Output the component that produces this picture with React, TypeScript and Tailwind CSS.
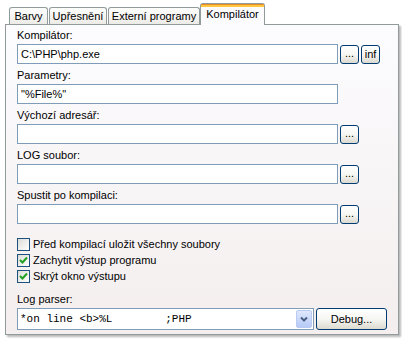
import React from 'react';

const font = { fontFamily: '"Liberation Sans", Arial, sans-serif' };

const XpButton: React.FC<{ label: string; className?: string }> = ({ label, className = '' }) => (
  <button
    className={`flex items-center justify-center rounded-[3px] border border-[#003c74] bg-gradient-to-b from-white via-[#f6f6f3] to-[#dcdad0] text-[11px] leading-none text-black ${className}`}
  >
    {label}
  </button>
);

const Field: React.FC<{ label: string; value?: string; extra?: boolean }> = ({ label, value = '', extra }) => (
  <div className="flex flex-col">
    <div className="h-[14px] text-[11px] leading-[14px] text-black">{label}</div>
    <div className="mt-[2px] flex items-center">
      <div className="flex h-[20px] w-[321px] items-center border border-[#7f9db9] bg-white px-[3px] text-[11px] text-black">
        {value}
      </div>
      <XpButton label="..." className="ml-[2px] h-[19px] w-[19px] pb-[2px]" />
      {extra && <XpButton label="inf" className="ml-[2px] h-[19px] w-[19px]" />}
    </div>
  </div>
);

const Checkbox: React.FC<{ label: string; checked?: boolean }> = ({ label, checked }) => (
  <div className="flex h-[16px] items-center">
    <div className="flex h-[13px] w-[13px] items-center justify-center border border-[#1c5180] bg-gradient-to-br from-[#dcdcd7] to-white">
      {checked && (
        <svg width="9" height="9" viewBox="0 0 9 9">
          <path d="M1 4 L3.5 6.5 L8 1.5" stroke="#21a121" strokeWidth="2" fill="none" />
        </svg>
      )}
    </div>
    <span className="ml-[3px] text-[11px] leading-none text-black">{label}</span>
  </div>
);

const tabs = [
  { name: 'Barvy', w: 'w-[39px]' },
  { name: 'Upřesnění', w: 'w-[58px]' },
  { name: 'Externí programy', w: 'w-[92px]' },
];

export default function App() {
  return (
    <div className="h-[344px] w-[402px] bg-white" style={font}>
      {/* Tabs */}
      <div className="flex h-[24px] items-end pl-[9px]">
        {tabs.map((t) => (
          <div
            key={t.name}
            className={`mr-px flex h-[17px] ${t.w} items-center justify-center rounded-t-[3px] border border-b-0 border-[#919b9c] bg-gradient-to-b from-white to-[#ecebe6] text-[11px] text-black`}
          >
            {t.name}
          </div>
        ))}
        <div className="relative z-10 -mb-px -ml-px flex h-[22px] w-[65px] flex-col rounded-t-[3px] border border-b-0 border-[#919b9c] bg-[#fcfcfe]">
          <div className="h-[1px] rounded-t-[2px] bg-[#e68b2c]" />
          <div className="h-[2px] bg-[#ffc73c]" />
          <div className="flex flex-1 items-start justify-center pt-[2px] text-[11px] leading-none text-black">Kompilátor</div>
        </div>
      </div>

      {/* Panel */}
      <div className="ml-[5px] flex h-[311px] w-[394px] flex-col border border-[#919b9c] bg-gradient-to-b from-[#fcfcfe] to-[#f4eeee] pl-[11px] pt-[3px] shadow-[2px_2px_2px_rgba(0,0,0,0.28)]">
        <div className="flex flex-col gap-[4px]">
          <Field label="Kompilátor:" value="C:\PHP\php.exe" extra />
          <div className="flex flex-col">
            <div className="h-[14px] text-[11px] leading-[14px] text-black">Parametry:</div>
            <div className="mt-[2px] flex h-[20px] w-[321px] items-center border border-[#7f9db9] bg-white px-[3px] text-[11px] text-black">
              "%File%"
            </div>
          </div>
          <Field label="Výchozí adresář:" />
          <Field label="LOG soubor:" />
          <Field label="Spustit po kompilaci:" />
        </div>

        <div className="mt-[12px] flex flex-col">
          <Checkbox label="Před kompilací uložit všechny soubory" />
          <Checkbox label="Zachytit výstup programu" checked />
          <Checkbox label="Skrýt okno výstupu" checked />
        </div>

        <div className="mt-[8px] h-[14px] text-[11px] leading-[14px] text-black">Log parser:</div>
        <div className="mt-[2px] flex items-center">
          <div className="flex h-[22px] w-[297px] items-center border border-[#7f9db9] bg-white pl-[2px] pr-px">
            <span
              className="flex-1 whitespace-pre text-[11px] text-black"
              style={{ fontFamily: '"Liberation Mono", "Courier New", monospace' }}
            >
              {'*on line <b>%L        ;PHP'}
            </span>
            <div className="flex h-[18px] w-[16px] items-center justify-center rounded-[2px] border border-[#b9cbf3] bg-gradient-to-b from-[#dfe8fd] to-[#b6caf7]">
              <svg width="8" height="6" viewBox="0 0 8 6">
                <path d="M1 1.5 L4 4.5 L7 1.5" stroke="#4d6185" strokeWidth="2" fill="none" />
              </svg>
            </div>
          </div>
          <XpButton label="Debug..." className="ml-[2px] h-[22px] w-[71px]" />
        </div>
      </div>
    </div>
  );
}
